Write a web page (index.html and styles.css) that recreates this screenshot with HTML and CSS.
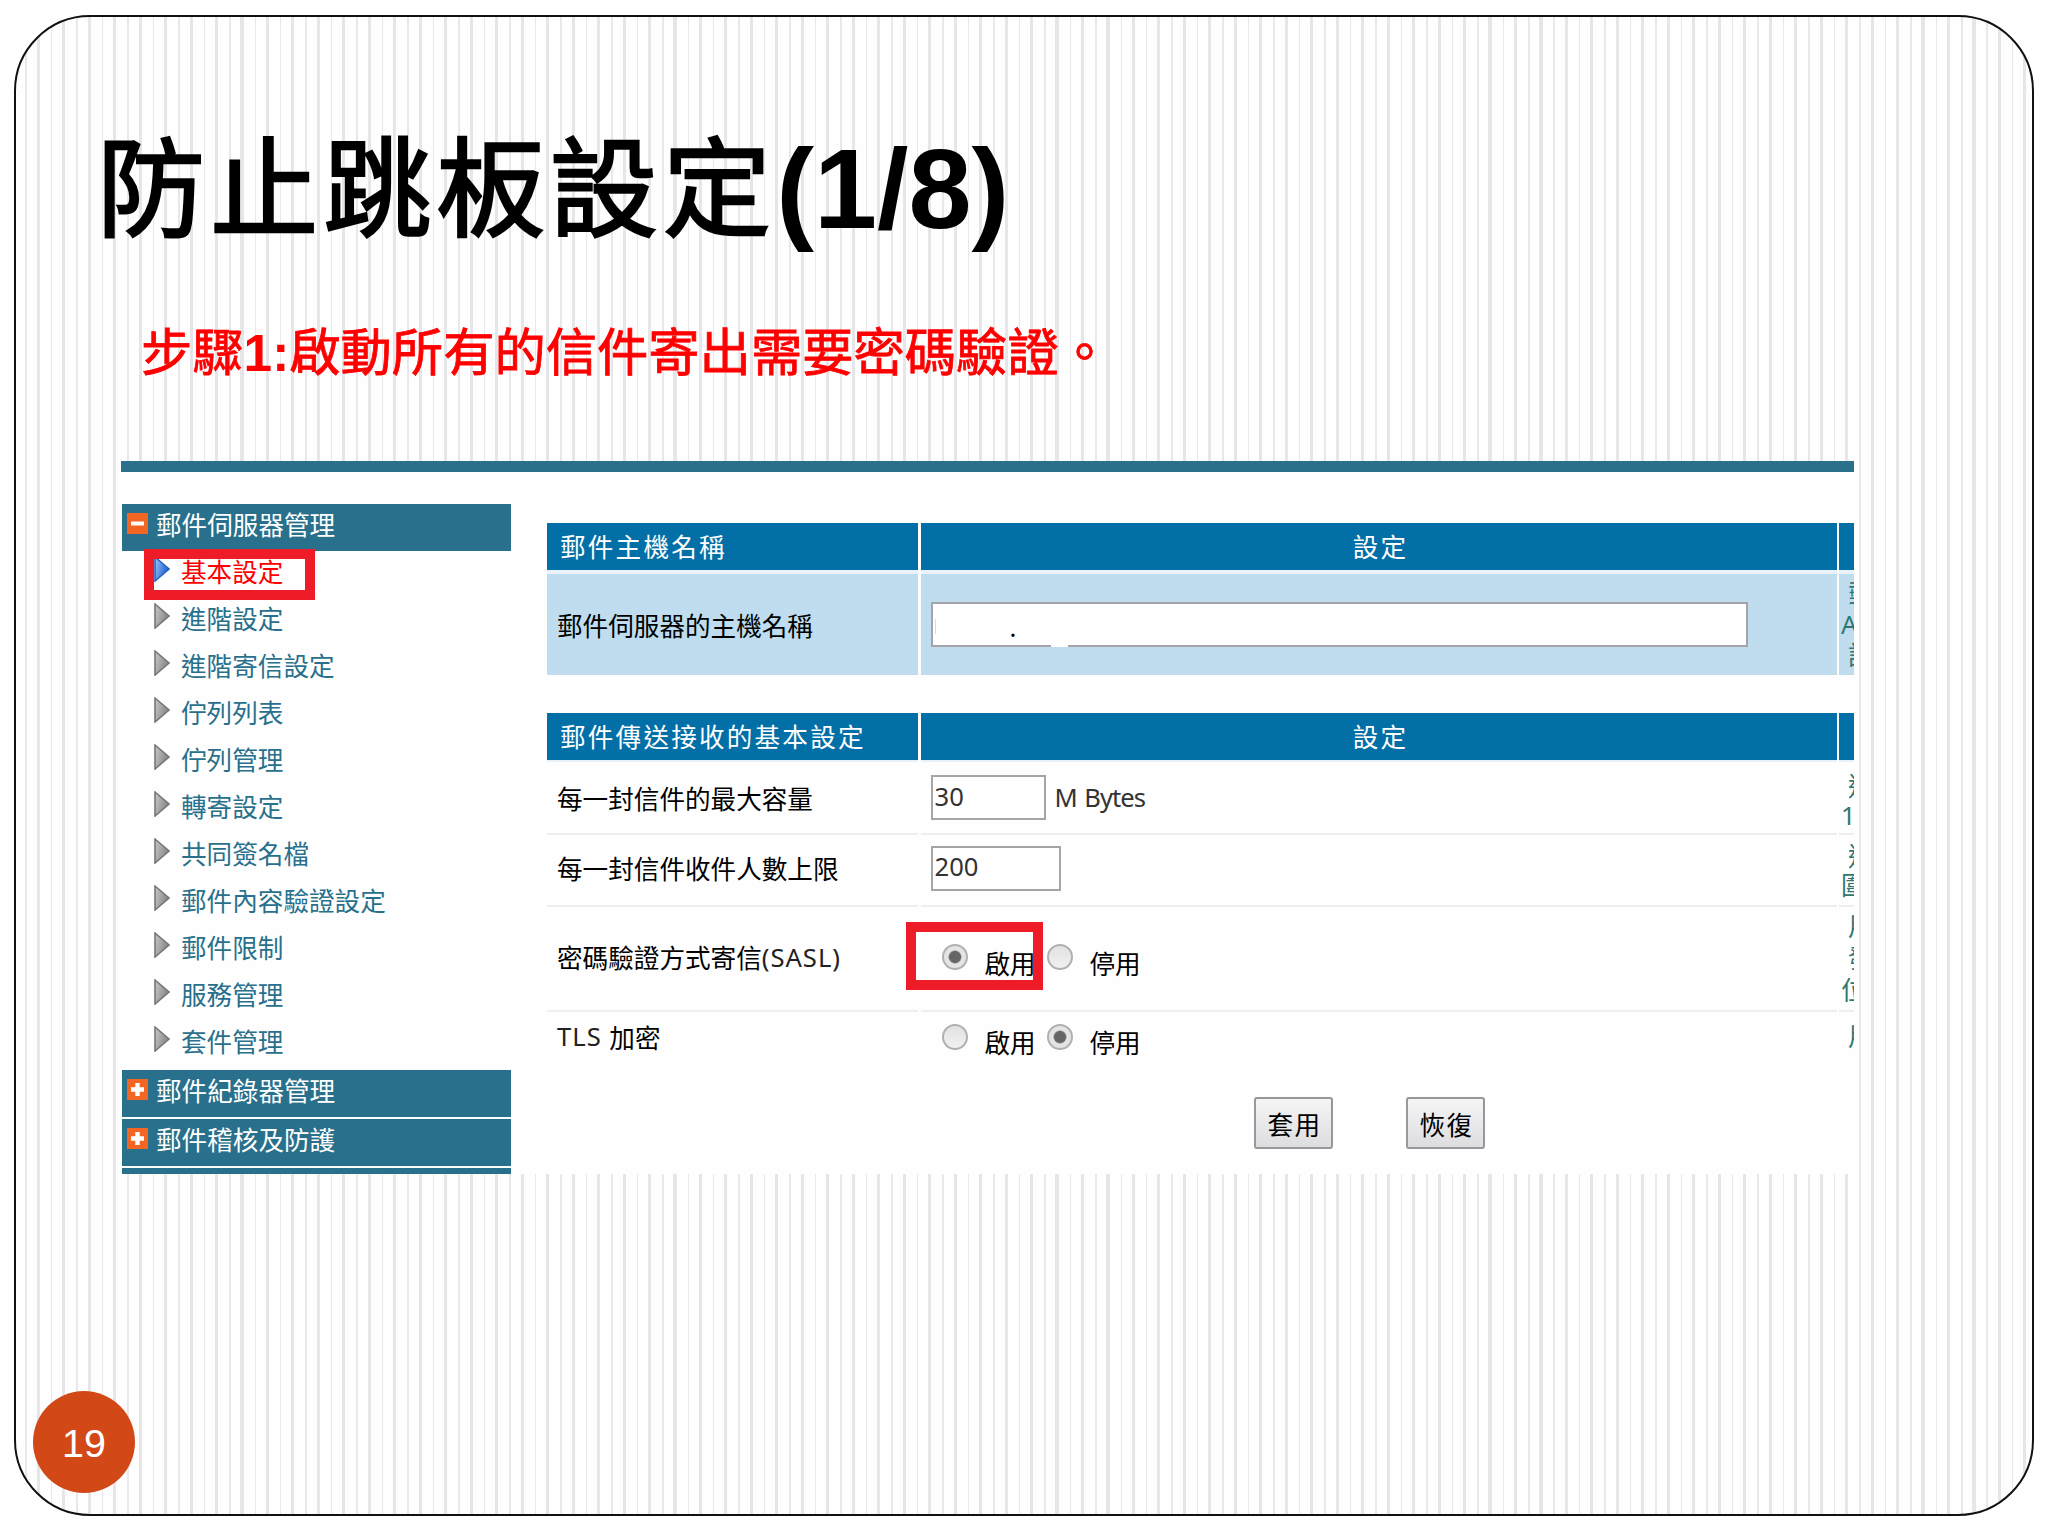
FILE: index.html
```html
<!DOCTYPE html>
<html lang="zh-Hant">
<head>
  <meta charset="UTF-8">
  <meta name="viewport" content="width=device-width, initial-scale=1.0">
  <title>防止跳板設定(1/8)</title>
  <link rel="stylesheet" href="styles.css">
</head>
<body>
  <svg class="defs" width="0" height="0">
    <linearGradient id="gray" x1="0" y1="0" x2="1" y2="0.4">
      <stop offset="0" stop-color="#c9c9c9"/>
      <stop offset="1" stop-color="#858585"/>
    </linearGradient>
    <linearGradient id="blue" x1="0" y1="0" x2="1" y2="0.4">
      <stop offset="0" stop-color="#9cc4f8"/>
      <stop offset="1" stop-color="#1c5fd0"/>
    </linearGradient>
    <symbol id="arrow" viewBox="0 0 16 26">
      <path d="M1 1 L15 13 L1 25 Z" fill="url(#gray)" stroke="#777" stroke-width="1.6"/>
    </symbol>
    <symbol id="arrow-on" viewBox="0 0 16 26">
      <path d="M1 1 L15 13 L1 25 Z" fill="url(#blue)" stroke="#2a62c4" stroke-width="1.6"/>
    </symbol>
    <symbol id="minus" viewBox="0 0 21 21">
      <rect width="21" height="21" fill="#f26522"/>
      <path d="M4 10.5 H17" stroke="#fff" stroke-width="4"/>
    </symbol>
    <symbol id="plus" viewBox="0 0 21 21">
      <rect width="21" height="21" fill="#f26522"/>
      <path d="M4 10.5 H17 M10.5 4 V17" stroke="#fff" stroke-width="4.4"/>
    </symbol>
  </svg>

  <div class="slide">
    <h1><span>防止跳板設定</span>(1/8)</h1>
    <p class="step"><span>步驟</span>1:<span>啟動所有的信件寄出需要密碼驗證。</span></p>

    <div class="capture">
      <div class="side">
        <div class="group"><svg><use href="#minus"/></svg>郵件伺服器管理</div>
        <ul class="menu">
          <li class="on"><svg><use href="#arrow-on"/></svg>基本設定<span class="mark"></span></li>
          <li><svg><use href="#arrow"/></svg>進階設定</li>
          <li><svg><use href="#arrow"/></svg>進階寄信設定</li>
          <li><svg><use href="#arrow"/></svg>佇列列表</li>
          <li><svg><use href="#arrow"/></svg>佇列管理</li>
          <li><svg><use href="#arrow"/></svg>轉寄設定</li>
          <li><svg><use href="#arrow"/></svg>共同簽名檔</li>
          <li><svg><use href="#arrow"/></svg>郵件內容驗證設定</li>
          <li><svg><use href="#arrow"/></svg>郵件限制</li>
          <li><svg><use href="#arrow"/></svg>服務管理</li>
          <li><svg><use href="#arrow"/></svg>套件管理</li>
        </ul>
        <div class="group"><svg><use href="#plus"/></svg>郵件紀錄器管理</div>
        <div class="group"><svg><use href="#plus"/></svg>郵件稽核及防護</div>
        <div class="group cut"></div>
      </div>

      <div class="main">
        <div class="row head"><div>郵件主機名稱</div><div>設定</div><div></div></div>
        <div class="row host">
          <div>郵件伺服器的主機名稱</div>
          <div><span class="host-box"><input class="wide" type="text"><span class="caret"></span><span class="dot">.</span><span class="gap"></span></span></div>
          <div class="hint"><p class="in">郵</p><p>A</p><p class="in">設</p></div>
        </div>

        <div class="row head second"><div>郵件傳送接收的基本設定</div><div>設定</div><div></div></div>
        <div class="row size">
          <div>每一封信件的最大容量</div>
          <div><input class="mb" type="text" value="30"><span class="unit">M Bytes</span></div>
          <div class="hint"><p class="in">這</p><p>1</p></div>
        </div>
        <div class="row count">
          <div>每一封信件收件人數上限</div>
          <div><input class="num" type="text" value="200"></div>
          <div class="hint"><p class="in">這</p><p>圍</p></div>
        </div>
        <div class="row sasl">
          <div>密碼驗證方式寄信<span class="latin">(SASL)</span></div>
          <div>
            <input type="radio" name="sasl" checked><label>啟用</label>
            <input type="radio" name="sasl"><label>停用</label>
            <span class="mark"></span>
          </div>
          <div class="hint"><p class="in">用</p><p class="in">發</p><p>位</p></div>
        </div>
        <div class="row tls">
          <div><span class="latin">TLS </span>加密</div>
          <div>
            <input type="radio" name="tls"><label>啟用</label>
            <input type="radio" name="tls" checked><label>停用</label>
          </div>
          <div class="hint"><p class="in">用</p></div>
        </div>
        <div class="buttons"><button>套用</button><button>恢復</button></div>
      </div>
    </div>

    <div class="page-no">19</div>
  </div>
</body>
</html>
```

FILE: styles.css
```css
* {
  box-sizing: border-box;
}
body {
  margin: 0;
  background: #fff;
  color: #000;
  font-family: "Noto Sans", "Noto Sans CJK TC", sans-serif;
  font-size: 25.6px;
}
h1, p, ul {
  margin: 0;
  padding: 0;
}
.defs {
  position: absolute;
}
.slide {
  position: relative;
  width: 2020px;
  height: 1501px;
  margin: 15px 0 0 14px;
  padding: 102px 0 0 85px;
  border: 2px solid #111;
  border-radius: 76px;
  background: repeating-linear-gradient(90deg, #fefefe 0, #fefefe 9.3px, #e8e7ea 9.3px, #e8e7ea 10.8px, #fefefe 10.8px, #fefefe 20.7px, #e6e5e8 20.7px, #e6e5e8 23.8px, #fefefe 23.8px, #fefefe 25.47px);
}
h1 {
  height: 140px;
  margin-left: -4px;
  line-height: 140px;
  font-family: "Liberation Sans", "Noto Sans CJK TC", sans-serif;
  font-size: 113.4px;
  font-weight: bold;
  white-space: nowrap;
}
h1 span {
  font-size: 108px;
  font-weight: normal;
  letter-spacing: 5.2px;
  -webkit-text-stroke: 2.4px #000;
}
.step {
  height: 70px;
  margin: 60px 0 0 40px;
  line-height: 70px;
  font-family: "Liberation Sans", "Noto Sans CJK TC", sans-serif;
  font-size: 51.3px;
  font-weight: bold;
  color: #f00;
}
.step span {
  font-weight: normal;
  -webkit-text-stroke: 0.8px #f00;
}

/* mail server screen */
.capture {
  display: flex;
  width: 1733px;
  height: 713px;
  margin: 72px 0 0 20px;
  border-top: 11px solid #2a708b;
  background: #fefefe;
  overflow: hidden;
}
.side {
  width: 389px;
  margin: 32px 36px 0 1px;
}
.group {
  display: flex;
  height: 47px;
  margin-bottom: 2px;
  padding-left: 5px;
  line-height: 44px;
  background: #28708b;
  color: #fff;
}
.group svg {
  width: 21px;
  height: 21px;
  margin: 9px 8px 0 0;
}
.cut {
  height: 7px;
}
.menu {
  height: 519px;
  margin-top: -2px;
  list-style: none;
  color: #28708b;
}
.menu li {
  position: relative;
  display: flex;
  height: 47px;
  padding-left: 31px;
  line-height: 44px;
}
.menu svg {
  width: 16px;
  height: 26px;
  margin: 5px 11px 0 1px;
}
.menu .on {
  color: #f00;
}
.mark {
  position: absolute;
  border: 10px solid #ed1c26;
}
.menu .mark {
  left: 22px;
  top: -2px;
  width: 171px;
  height: 51px;
}

.main {
  flex: none;
  width: 1307px;
  padding-top: 51px;
}
.row {
  display: grid;
  grid-template-columns: 371px 916px 15px;
  column-gap: 2.5px;
}
.row > div {
  position: relative;
  display: flex;
  align-items: center;
  padding: 0 0 2px 10px;
  border-bottom: 2px solid #eeedf1;
  white-space: nowrap;
}
.head {
  height: 47px;
  color: #fff;
  letter-spacing: 2.2px;
}
.row.head > div {
  padding: 0 0 2px 13px;
  border: 0;
  background: #026fa7;
}
.row.head > div:nth-child(2) {
  justify-content: center;
  padding-left: 4px;
}
.host {
  height: 105px;
}
.host > div {
  padding-bottom: 0;
  border-top: 4px solid #e8f2f8;
  border-bottom: 0;
  background: #bfddee;
}
.second {
  margin-top: 38px;
}
.size {
  height: 75px;
}
.size > div {
  padding-bottom: 0;
  border-top: 2px solid #e8f1f8;
}
.count {
  height: 72px;
}
.count > div {
  padding-bottom: 4px;
}
.sasl {
  height: 105px;
}
.sasl > div {
  padding-bottom: 3px;
}
.tls {
  height: 52px;
}
.tls > div {
  padding-bottom: 13px;
  border: 0;
}
.row > .hint {
  display: block;
  padding: 10px 0 0 2px;
  color: #2f786f;
  line-height: 29px;
  overflow: hidden;
}
.hint .in {
  padding-left: 7px;
}
.host > .hint {
  padding-top: 4px;
  line-height: 31px;
}
.count > .hint {
  padding-top: 7px;
}
.sasl > .hint {
  padding-top: 4px;
  line-height: 32px;
}
input[type="text"] {
  height: 45px;
  margin: 0 0 0 0;
  padding: 0 2px 3px;
  border: 2px solid #a5a4a8;
  background: #fff;
  color: #333;
  font: inherit;
}
.host-box {
  position: relative;
  display: flex;
}
.wide {
  width: 817px;
}
.caret {
  position: absolute;
  left: 4px;
  top: 17px;
  width: 1px;
  height: 15px;
  background: #fbdc7a;
}
.dot {
  position: absolute;
  left: 79px;
  top: 8px;
  line-height: 35px;
}
.gap {
  position: absolute;
  left: 120px;
  bottom: 0;
  width: 17px;
  height: 2px;
  background: #fff;
}
.mb {
  width: 115px;
}
.num {
  width: 130px;
}
.unit {
  margin-left: 9px;
  color: #333;
  letter-spacing: -1px;
  word-spacing: 2px;
}
.latin {
  color: #222;
  white-space: pre;
  letter-spacing: 1px;
}
input[type="radio"] {
  appearance: none;
  flex: none;
  width: 26px;
  height: 26px;
  margin: 0 17px 0 11px;
  border: 2px solid #b0b0b2;
  border-radius: 50%;
  background: linear-gradient(#e2e2e2, #f1f1f1);
}
input[type="radio"]:checked {
  background: radial-gradient(circle, #666 0, #666 5.5px, #e4e4e4 7px);
}
label {
  width: 51px;
  padding-top: 11px;
}
.row .mark {
  left: -15px;
  top: 15px;
  width: 137px;
  height: 68px;
}
.buttons {
  display: flex;
  gap: 73px;
  padding: 33px 0 0 707px;
}
button {
  width: 79px;
  height: 52px;
  padding: 2px 0 0 2px;
  border: 2px solid #98979b;
  border-radius: 3px;
  background: linear-gradient(#f5f5f6, #dddde0);
  color: #000;
  font: inherit;
  letter-spacing: 1.5px;
}

.page-no {
  position: absolute;
  left: 17px;
  top: 1374px;
  width: 102px;
  height: 102px;
  border-radius: 50%;
  background: #d24817;
  color: #fff;
  font-family: "Liberation Sans", sans-serif;
  font-size: 39.5px;
  line-height: 105px;
  text-align: center;
}
```
